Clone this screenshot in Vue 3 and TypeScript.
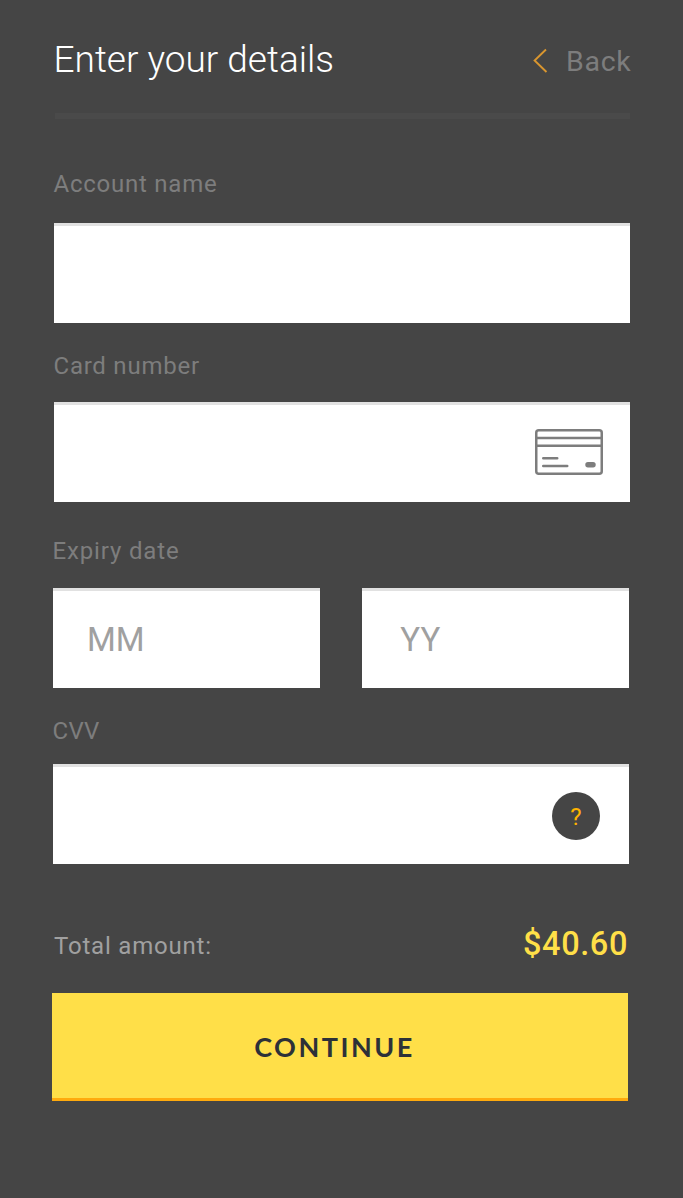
<script setup lang="ts">
import { ref } from 'vue'

const accountName = ref('')
const cardNumber = ref('')
const month = ref('')
const year = ref('')
const cvv = ref('')
const total = '$40.60'
</script>

<template>
  <form class="page" @submit.prevent>
    <header class="header">
      <h1 class="title">Enter your details</h1>
      <a class="back">
        <svg class="chevron" width="15" height="26" viewBox="0 0 15 26" fill="none">
          <path d="M13 1.5 L1.6 12.5 L13.5 24" stroke="#d9962f" stroke-width="1.9" />
        </svg>
        <span class="back-text">Back</span>
      </a>
    </header>
    <div class="divider"></div>

    <section class="group account">
      <label class="label account-label" for="account">Account name</label>
      <input id="account" v-model="accountName" class="field" type="text" />
    </section>

    <section class="group card">
      <label class="label card-label" for="card">Card number</label>
      <div class="field with-icon">
        <input id="card" v-model="cardNumber" class="bare" type="text" />
        <svg class="card-icon" width="68" height="46" viewBox="0 0 68 46" fill="none">
          <rect x="1.25" y="1.25" width="65.5" height="43.5" rx="2.5" stroke="#7d7d7d" stroke-width="2.5" />
          <path d="M1 9H67M1 16.8H67" stroke="#7d7d7d" stroke-width="2.5" />
          <path d="M8.3 29.3H22.2M8.3 37H32.2" stroke="#7d7d7d" stroke-width="2.6" stroke-linecap="round" />
          <rect x="50.3" y="33" width="10.4" height="5.4" rx="2.6" fill="#7d7d7d" />
        </svg>
      </div>
    </section>

    <section class="group expiry">
      <label class="label expiry-label" for="month">Expiry date</label>
      <div class="dates">
        <input id="month" v-model="month" class="field month" type="text" placeholder="MM" />
        <input id="year" v-model="year" class="field year" type="text" placeholder="YY" />
      </div>
    </section>

    <section class="group cvv">
      <label class="label cvv-label" for="cvv">CVV</label>
      <div class="field with-icon">
        <input id="cvv" v-model="cvv" class="bare" type="text" />
        <span class="help">?</span>
      </div>
    </section>

    <div class="summary">
      <span class="total-label">Total amount:</span>
      <span class="total">{{ total }}</span>
    </div>
    <button class="continue" type="submit">CONTINUE</button>
  </form>
</template>

<style>
body {
  background: #454545;
}
</style>

<style scoped>
.page {
  box-sizing: border-box;
  width: 683px;
  height: 1198px;
  padding: 39px 53px 0 54px;
  background: #454545;
  font-family: Roboto, sans-serif;
  display: flex;
  flex-direction: column;
}
.header {
  display: flex;
  justify-content: space-between;
  height: 74px;
}
.title {
  margin: 0;
  margin-left: -0.5px;
  font-size: 37px;
  line-height: 42px;
  font-weight: 300;
  letter-spacing: 0;
  color: #fff;
}
.back {
  display: flex;
  height: 44px;
  color: #7d7d7d;
}
.chevron {
  margin: 9px 18.5px 0 0;
}
.back-text {
  font-size: 28.5px;
  line-height: 46px;
  letter-spacing: 0.7px;
  margin-right: -1.5px;
}
.divider {
  height: 6px;
  width: 575px;
  margin-left: 1px;
  background: #4a4a4a;
}
.group {
  display: flex;
  flex-direction: column;
  width: 576px;
}
.label {
  height: 28px;
  margin-left: -0.5px;
  font-size: 24px;
  line-height: 28px;
  letter-spacing: 0.76px;
  color: #7d7d7d;
}
.field {
  box-sizing: border-box;
  width: 100%;
  height: 100px;
  margin: 0;
  border: 0;
  border-top: 3px solid #e1e1e1;
  border-radius: 0;
  background: #fff;
  padding: 0 34px;
  outline: 0;
  font-family: Roboto, sans-serif;
  font-size: 33px;
  color: #454545;
}
.field::placeholder {
  color: #a0a0a0;
  opacity: 1;
}
.with-icon {
  display: flex;
  align-items: center;
  padding: 0 27px 0 34px;
}
.bare {
  flex: 1;
  min-width: 0;
  border: 0;
  outline: 0;
  padding: 0;
  background: transparent;
  font: inherit;
}
.account {
  margin-top: 51px;
}
.account-label {
  margin-bottom: 25px;
}
.card {
  margin-top: 29px;
}
.card-label {
  margin-bottom: 22px;
}
.card-icon {
  margin-top: -3px;
}
.expiry {
  margin: 35px 0 0 -1px;
}
.expiry-label {
  margin-bottom: 23px;
  letter-spacing: 0.85px;
}
.dates {
  display: flex;
  justify-content: space-between;
}
.month,
.year {
  width: 266.7px;
}
.year {
  padding-left: 38px;
}
.cvv {
  margin: 29px 0 0 -1px;
}
.cvv-label {
  margin-bottom: 19px;
  letter-spacing: 0.3px;
}
.cvv .with-icon {
  padding-right: 29px;
}
.help {
  width: 48px;
  height: 48px;
  margin-top: 1px;
  border-radius: 50%;
  background: #454545;
  color: #ffb400;
  font-size: 24px;
  line-height: 50px;
  text-align: center;
}
.summary {
  display: flex;
  justify-content: space-between;
  height: 61px;
  margin-top: 68px;
}
.total-label {
  font-size: 24px;
  line-height: 28px;
  letter-spacing: 0.8px;
  color: #a0a0a0;
}
.total {
  margin-right: 2px;
  font-size: 32.5px;
  line-height: 24px;
  font-weight: 500;
  letter-spacing: 0.6px;
  color: #ffdf48;
}
.continue {
  box-sizing: border-box;
  width: 576px;
  height: 108px;
  margin-left: -2px;
  padding: 2px 11px 0 0;
  border: 0;
  border-bottom: 3px solid #ffaa0d;
  background: #ffdf48;
  color: #2d3138;
  font-family: Lato, sans-serif;
  font-size: 27px;
  font-weight: 700;
  letter-spacing: 2.5px;
}
</style>
